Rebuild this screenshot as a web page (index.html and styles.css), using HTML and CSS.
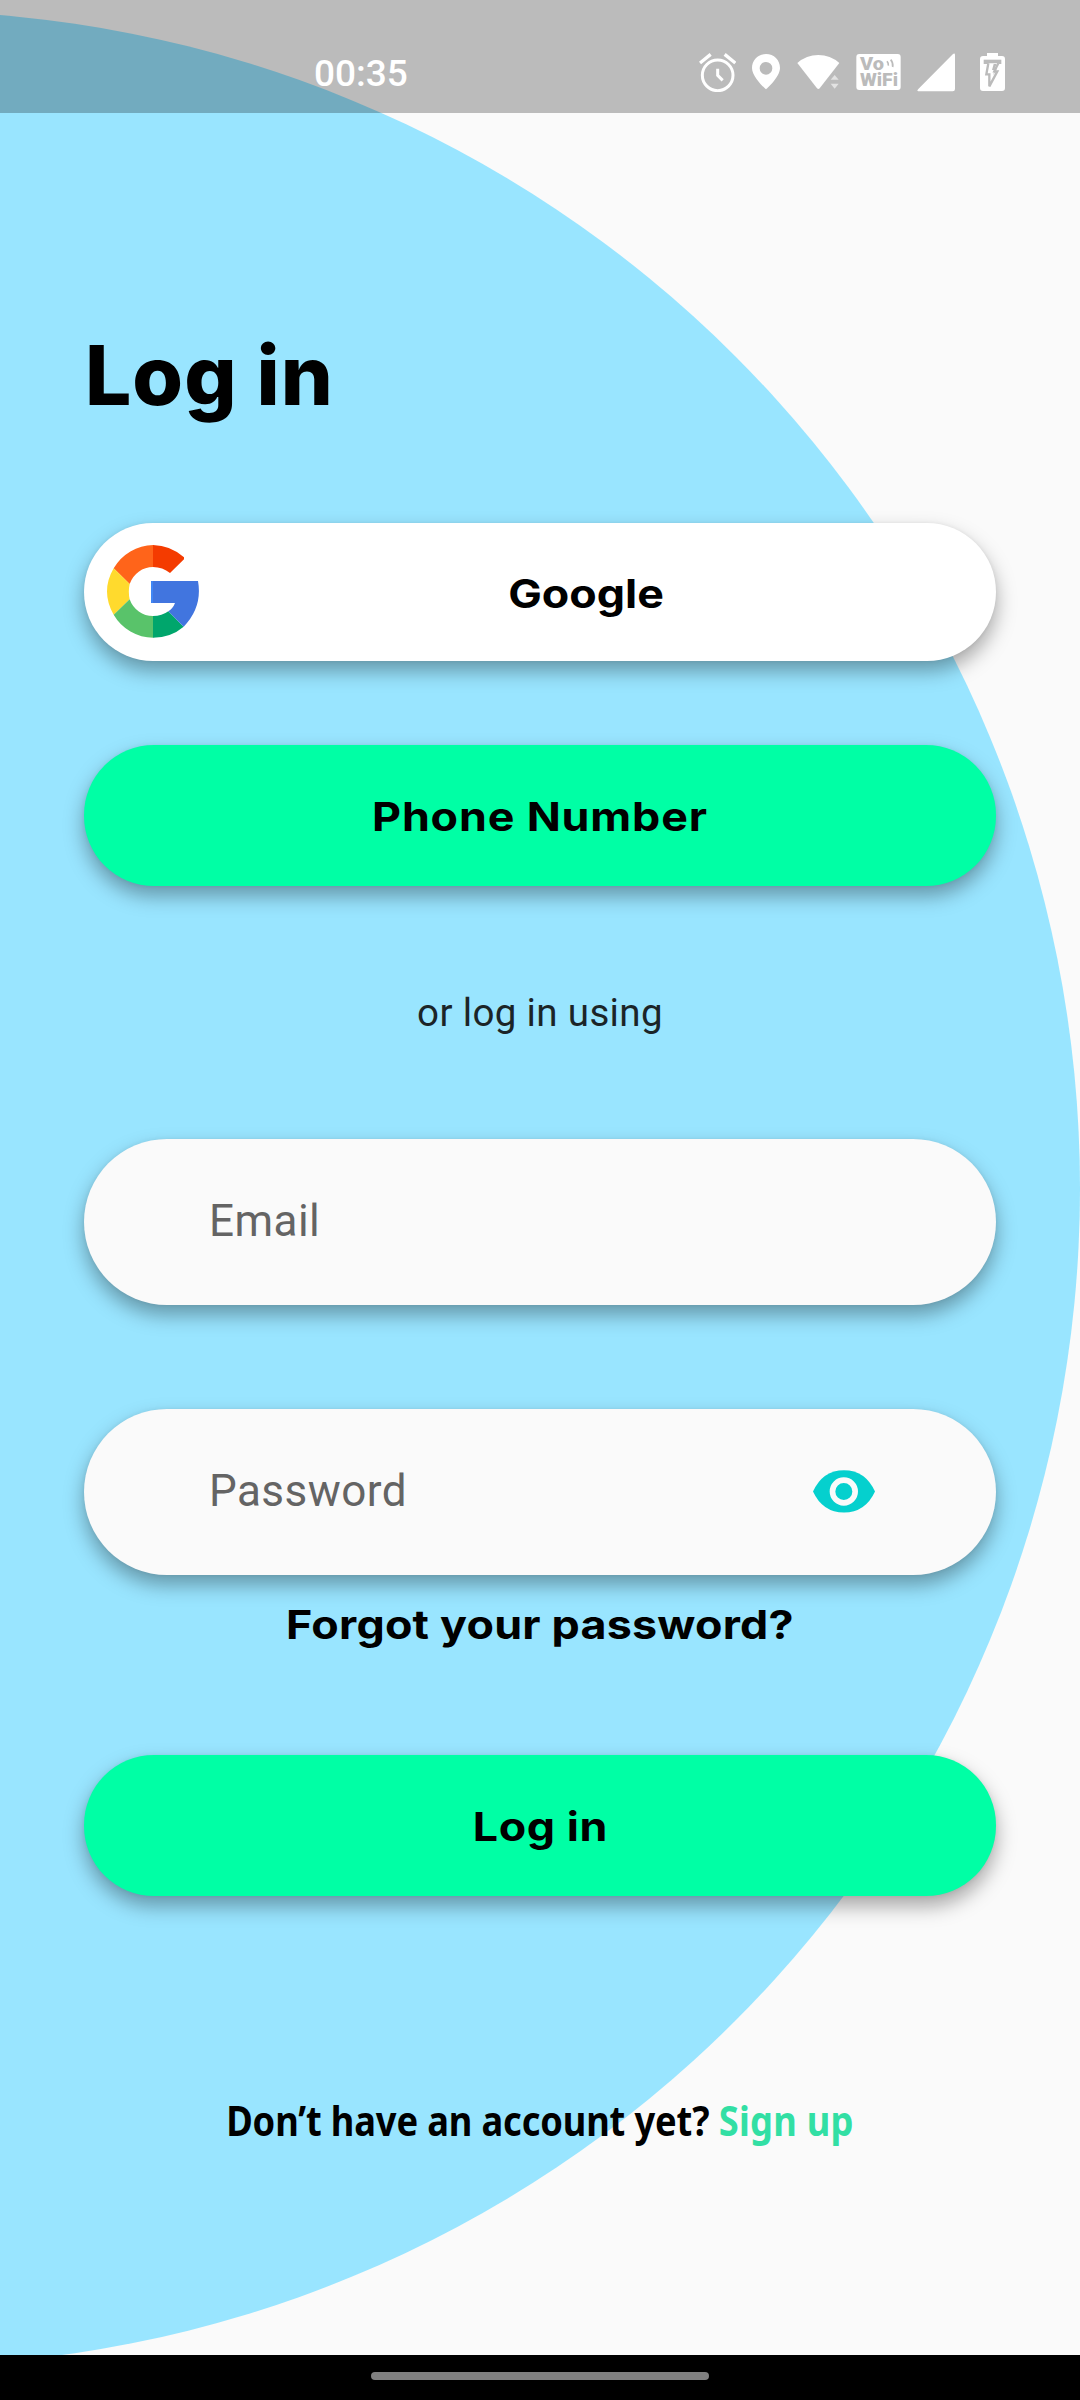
FILE: index.html
```html
<!DOCTYPE html>
<html lang="en">
<head>
<meta charset="utf-8">
<title>Log in</title>
<link rel="stylesheet" href="styles.css">
</head>
<body>
<div class="screen">
  <div class="backdrop"></div>
  <header class="status">
    <span class="clock">00:35</span>
    <div class="icons">
      <svg class="i-alarm" width="37" height="39" viewBox="58 67 111 117"><g fill="none" stroke="#fff"><circle cx="114" cy="134" r="46" stroke-width="9"/><path d="M114 114v20l15 15" stroke-width="9"/><path d="M61 97l32-26M167 97l-32-26" stroke-width="10"/></g></svg>
      <svg class="i-pin" width="28" height="36" viewBox="216 72 84 108"><path fill="#fff" fill-rule="evenodd" d="M258 72c-24 0-42 18-42 42 0 28 42 64 42 64s42-36 42-64c0-24-18-42-42-42zm0 24a19 19 0 1 1 0 38 19 19 0 0 1 0-38z"/></svg>
      <svg class="i-wifi" width="43" height="36" viewBox="350 73 129 108"><path fill="#fff" d="M351 100Q378 76 414 76t63 24l-59 76q-4 4-8 0z"/><path fill="#e2e2e2" d="M451 150l12-14 12 14zM451 162h24l-12 15z"/></svg>
      <svg class="i-vowifi" width="45" height="36" viewBox="529 72 135 108"><rect x="530" y="72" width="133" height="108" rx="9" fill="#fff"/><g class="badge"><text x="541" y="121" textLength="72" lengthAdjust="spacingAndGlyphs">Vo</text><text x="541" y="168" textLength="114" lengthAdjust="spacingAndGlyphs">WiFi</text></g><path d="M622 94q5 6 4 13M633 89q8 9 6 22" fill="none" stroke="#bbb" stroke-width="5"/></svg>
      <svg class="i-signal" width="38" height="39" viewBox="710 70 114 117"><path fill="#fff" d="M714 178l104-105q6-4 6 3v102q0 7-7 7H714q-6-1 0-7z"/></svg>
      <svg class="i-battery" width="25" height="38" viewBox="900 69 75 114"><path fill="#fff" d="M921 69h33v9h12q9 0 9 9v87q0 9-9 9h-57q-9 0-9-9V87q0-9 9-9h12z"/><path d="M911 89h53v13h-53z" fill="#bbb"/><path d="M925 100l-6 33h9v36l24-45h-9l12-24" fill="#fff" stroke="#bbb" stroke-width="7"/><path d="M941 102l-5 18h7l-3 16 11-21h-7l6-13" fill="#bbb"/></svg>
    </div>
  </header>
  <main class="login">
    <h1 class="title">Log in</h1>
    <button class="btn google">
      <svg class="g-logo" width="93" height="93" viewBox="111 135 279 279"><path fill="#ff641a" d="M250 135A139 139 0 0 0 131 205L179 252A74 74 0 0 1 250 201z"/><path fill="#f43b00" d="M249 135Q302 136 342 172v6L300 219Q278 201 249 201z"/><path fill="#ffda2d" d="M131 205Q91 274 131 344L179 298Q174 275 179 252z"/><path fill="#59c36a" d="M131 344A139 139 0 0 0 250 413V348A74 74 0 0 1 179 298z"/><path fill="#00a66c" d="M249 413Q302 413 341 380L295 334Q276 348 249 348z"/><path fill="#4175df" d="M243 243H384Q398 321 341 380L295 334Q309 325 315 309H243z"/><path fill="#4086f4" d="M246 243h3v66h-3q-3 0-3-3v-60q0-3 3-3z"/></svg>
      <span class="label">Google</span>
    </button>
    <button class="btn phone"><span class="label">Phone Number</span></button>
    <p class="divider">or log in using</p>
    <div class="field email"><span>Email</span></div>
    <div class="field password"><span>Password</span>
      <svg width="62" height="43" viewBox="99 240 186 128"><path fill="#05d0ce" d="M99 304Q128 240 192 240t93 64Q256 367 192 367T99 304z"/><circle cx="191.500" cy="304" r="34" fill="none" stroke="#fafafa" stroke-width="17"/></svg>
    </div>
    <a class="forgot">Forgot your password?</a>
    <button class="btn submit"><span class="label">Log in</span></button>
    <p class="signup"><span>Don’t have an account yet? </span><a>Sign up</a></p>
  </main>
  <footer class="nav"><div class="handle"></div></footer>
</div>
</body>
</html>
```
FILE: styles.css
```css
* { box-sizing: border-box; }
body { margin: 0; }
.screen { position: relative; width: 1080px; height: 2400px; overflow: hidden; background: #fafafa; display: flex; flex-direction: column; font-family: Roboto, sans-serif; }
.backdrop { position: absolute; left: -1276px; top: 11px; width: 2356px; height: 2355px; border-radius: 50%; background: #99e5ff; }
.status { position: relative; height: 113px; background: rgba(0, 0, 0, .25); display: flex; justify-content: space-between; padding: 0 75px 0 314px; }
.clock { color: #fff; font-size: 37px; font-weight: 500; line-height: 44px; padding-top: 52px; }
.icons { display: flex; align-items: flex-start; padding-top: 53px; }
.icons svg { display: block; }
.i-pin { margin: 1px 0 0 16px; }
.i-wifi { margin: 1px 0 0 17px; }
.i-vowifi { margin: 1px 0 0 16px; }
.i-signal { margin: 0 0 0 16px; }
.i-battery { margin: 0 0 0 25px; }
.badge { font: 900 54px Roboto, sans-serif; fill: #bbb; }
.login { position: relative; height: 2242px; padding: 0 84px; display: flex; flex-direction: column; }
.title { margin: 203px 0 0 1px; height: 120px; font: 800 82px/120px Inter, sans-serif; letter-spacing: 1px; color: #000; }
.btn { border: 0; padding: 0; height: 140px; border-radius: 70px; background: #00ffa5; display: flex; align-items: center; justify-content: center; box-shadow: 0 10px 20px rgba(0, 0, 0, .34), 0 0 4px rgba(0, 0, 0, .06); }
.label, .forgot { font: 700 40px/50px Inter, sans-serif; color: #000; transform: scaleX(1.12); }
.btn .label { padding-top: 3px; }
.google { height: 138px; margin-top: 87px; background: #fff; padding: 0 24px 0 23px; }
.g-logo { margin-bottom: 1px; }
.google .label { flex: 1; text-align: center; }
.phone { margin-top: 84px; height: 141px; }
.phone .label { letter-spacing: .75px; }
.divider { margin: 104px 0 0; font-size: 38.500px; line-height: 46px; letter-spacing: .35px; text-align: center; color: #1b2427; }
.field { height: 166px; border-radius: 83px; background: #fafafa; padding: 0 121px 2px 125px; display: flex; align-items: center; justify-content: space-between; font-size: 44px; letter-spacing: .45px; color: #646464; box-shadow: 0 10px 20px rgba(0, 0, 0, .34), 0 0 4px rgba(0, 0, 0, .06); }
.email { margin-top: 103px; }
.password { margin-top: 104px; }
.forgot { margin-top: 25px; text-align: center; letter-spacing: .2px; }
.submit { margin-top: 105px; height: 141px; }
.submit .label { letter-spacing: .5px; }
.signup { margin: 194px 0 0; font: 700 41px/60px "Noto Sans", sans-serif; text-align: center; color: #000; white-space: nowrap; transform: scaleX(.885); }
.signup span { letter-spacing: -.17px; }
.signup a { color: #32dfa4; letter-spacing: .3px; }
.nav { position: relative; flex: 1; background: #000; display: flex; justify-content: center; padding-top: 17px; }
.handle { width: 338px; height: 8px; border-radius: 4px; background: #808080; }
```
